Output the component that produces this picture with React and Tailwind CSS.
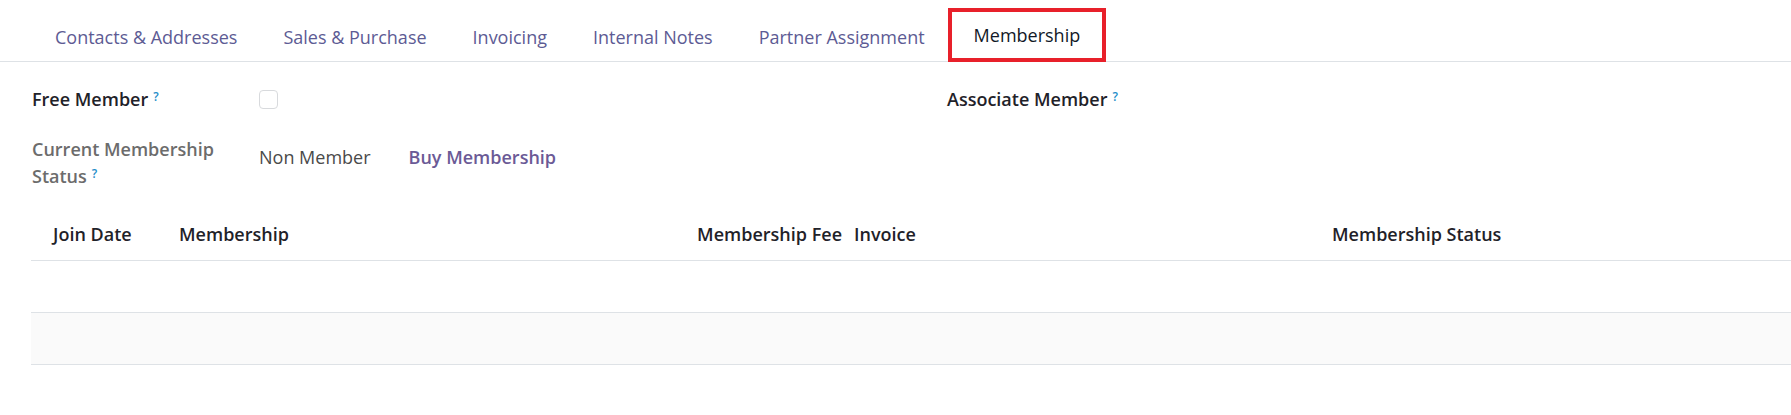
import { useState } from "react";

const tabs = [
  "Contacts & Addresses",
  "Sales & Purchase",
  "Invoicing",
  "Internal Notes",
  "Partner Assignment",
  "Membership",
];

function Help() {
  return (
    <sup className="ml-[5px] relative -top-[5px] text-[12px] font-semibold text-[#1f8ec9]">?</sup>
  );
}

export default function App() {
  const [active, setActive] = useState("Membership");
  const [freeMember, setFreeMember] = useState(false);

  return (
    <div
      className="w-[1791px] h-[415px] bg-white overflow-hidden text-[18px]"
      style={{ fontFamily: '"Open Sans", "Noto Sans", sans-serif' }}
    >
      {/* Tabs */}
      <div className="flex border-b border-[#dee2e6] h-[62px] pl-[32px]">
        {tabs.map((tab) => (
          <button
            key={tab}
            onClick={() => setActive(tab)}
            className={
              tab === active
                ? "mt-[8px] h-[54px] px-[22px] pt-[1px] border-[4px] border-[#e8202a] text-[#111827] -mb-px bg-white"
                : "h-[62px] px-[23px] pt-[13px] text-[#5d5b94]"
            }
          >
            {tab}
          </button>
        ))}
      </div>

      {/* Fields */}
      <div className="flex pl-[32px] pt-[16px]">
        <div className="w-[915px]">
          <div className="flex items-center h-[42px]">
            <div className="w-[227px] font-semibold text-[#1f2229]">
              Free Member
              <Help />
            </div>
            <input
              type="checkbox"
              checked={freeMember}
              onChange={() => setFreeMember(!freeMember)}
              className="appearance-none w-[19px] h-[19px] rounded-[4px] border border-[#d8dadd] bg-white"
            />
          </div>
          <div className="flex items-start mt-[16px]">
            <div className="w-[227px] font-semibold text-[#6c6c6c] leading-[27px]">
              Current Membership
              <br />
              Status
              <Help />
            </div>
            <div className="flex items-center gap-[38px] pt-[8px]">
              <span className="text-[#4a4a4a]">Non Member</span>
              <button className="font-semibold text-[#6b5a96]">Buy Membership</button>
            </div>
          </div>
        </div>
        <div className="flex-1">
          <div className="flex items-center h-[42px]">
            <div className="font-semibold text-[#1f2229]">
              Associate Member
              <Help />
            </div>
          </div>
        </div>
      </div>

      {/* Membership lines */}
      <div className="ml-[31px] mt-[19px]">
        <div className="grid grid-cols-[136px_518px_163px_472px_1fr] h-[52px] items-center border-b border-[#dee2e6] font-semibold text-[#1f2229]">
          <div className="pl-[22px]">Join Date</div>
          <div className="pl-[12px]">Membership</div>
          <div className="text-right pr-[6px]">Membership Fee</div>
          <div className="pl-[6px]">Invoice</div>
          <div className="pl-[12px]">Membership Status</div>
        </div>
        <div className="h-[52px] border-b border-[#dee2e6] bg-white" />
        <div className="h-[52px] border-b border-[#dee2e6] bg-[#fafafa]" />
      </div>
    </div>
  );
}
